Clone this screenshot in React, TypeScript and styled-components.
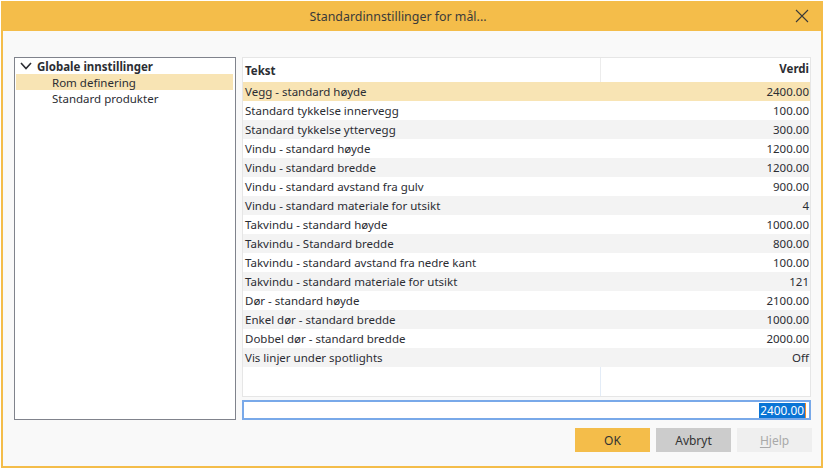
import React from 'react';
import styled, { createGlobalStyle } from 'styled-components';

const GlobalStyle = createGlobalStyle`
  html, body {
    margin: 0;
    padding: 0;
    background: #ffffff;
  }
  * {
    box-sizing: border-box;
  }
`;

const rows: { label: string; value: string }[] = [
  { label: 'Vegg - standard høyde', value: '2400.00' },
  { label: 'Standard tykkelse innervegg', value: '100.00' },
  { label: 'Standard tykkelse yttervegg', value: '300.00' },
  { label: 'Vindu - standard høyde', value: '1200.00' },
  { label: 'Vindu - standard bredde', value: '1200.00' },
  { label: 'Vindu - standard avstand fra gulv', value: '900.00' },
  { label: 'Vindu - standard materiale for utsikt', value: '4' },
  { label: 'Takvindu - standard høyde', value: '1000.00' },
  { label: 'Takvindu - Standard bredde', value: '800.00' },
  { label: 'Takvindu - standard avstand fra nedre kant', value: '100.00' },
  { label: 'Takvindu - standard materiale for utsikt', value: '121' },
  { label: 'Dør - standard høyde', value: '2100.00' },
  { label: 'Enkel dør - standard bredde', value: '1000.00' },
  { label: 'Dobbel dør - standard bredde', value: '2000.00' },
  { label: 'Vis linjer under spotlights', value: 'Off' },
];

const Window = styled.div`
  margin: 1px 0 0 1px;
  width: 822px;
  height: 467px;
  border: 2px solid #f4bd4a;
  border-top: none;
  background: #f9f9f9;
  display: flex;
  flex-direction: column;
  font-family: 'Noto Sans', 'Open Sans', sans-serif;
  color: #2b2d33;
`;

const TitleBar = styled.div`
  height: 30px;
  background: #f4bd4a;
  display: flex;
  align-items: center;
  justify-content: center;
  position: relative;
  padding-right: 28px;
  font-size: 12.4px;
  color: #3a3a3a;
`;

const CloseButton = styled.div`
  position: absolute;
  right: 12px;
  top: 8px;
  width: 14px;
  height: 14px;
  display: flex;
`;

const Body = styled.div`
  flex: 1;
  display: flex;
  flex-direction: column;
  padding: 26px 10px 0 11px;
`;

const Main = styled.div`
  display: flex;
  gap: 6px;
  height: 363px;
`;

const Tree = styled.div`
  width: 222px;
  border: 1px solid #80838c;
  background: #ffffff;
  padding: 0 2px 0 1px;
  font-size: 11.5px;
`;

const TreeNode = styled.div<{ $selected?: boolean; $level: number }>`
  height: 16px;
  display: flex;
  align-items: center;
  padding-left: ${(p) => (p.$level === 0 ? 4 : 36)}px;
  background: ${(p) => (p.$selected ? '#f8e4b4' : 'transparent')};
  font-weight: ${(p) => (p.$level === 0 ? 700 : 400)};
  gap: 5px;
  white-space: nowrap;
`;

const RightColumn = styled.div`
  flex: 1;
  display: flex;
  flex-direction: column;
  gap: 3px;
`;

const Grid = styled.div`
  height: 340px;
  border: 1px solid #e6e6e6;
  background: #ffffff;
  display: flex;
  flex-direction: column;
  font-size: 11.5px;
`;

const Row = styled.div<{ $bg: string; $height: number }>`
  display: grid;
  grid-template-columns: 358px 1fr;
  height: ${(p) => p.$height}px;
  background: ${(p) => p.$bg};
`;

const HeaderRow = styled(Row)`
  padding-bottom: 3px;
`;

const Cell = styled.div<{ $right?: boolean; $bold?: boolean; $line?: string }>`
  display: flex;
  align-items: center;
  justify-content: ${(p) => (p.$right ? 'flex-end' : 'flex-start')};
  padding: ${(p) => (p.$right ? '0 1px 0 0' : '0 0 0 2px')};
  font-weight: ${(p) => (p.$bold ? 700 : 400)};
  border-right: ${(p) => (p.$right ? 'none' : `1px solid ${p.$line ?? 'transparent'}`)};
  white-space: nowrap;
  overflow: hidden;
`;

const HeaderCell = styled(Cell)`
  margin-bottom: -3px;
`;

const Filler = styled(Row)`
  flex: 1;
`;

const EditBox = styled.div`
  height: 20px;
  border: 2px solid #79a9e9;
  background: #ffffff;
  display: flex;
  align-items: center;
  justify-content: flex-end;
  padding-right: 3px;
  font-size: 11.8px;
`;

const Selection = styled.span`
  background: #0a74d5;
  color: #ffffff;
  line-height: 15px;
  padding: 0 1px;
  border-right: 1px solid #f08a2a;
`;

const Buttons = styled.div`
  display: flex;
  justify-content: flex-end;
  gap: 6px;
  margin-top: 8px;
  margin-right: -1px;
`;

const Button = styled.div<{ $kind: 'primary' | 'secondary' | 'disabled' }>`
  width: 75px;
  height: 24px;
  display: flex;
  align-items: center;
  justify-content: center;
  font-size: 12px;
  background: ${(p) =>
    p.$kind === 'primary' ? '#f4bd4a' : p.$kind === 'secondary' ? '#cccccc' : '#efefef'};
  color: ${(p) => (p.$kind === 'disabled' ? '#a9a9a9' : '#333333')};

  u {
    text-decoration-thickness: 1px;
    text-underline-offset: 2px;
  }
`;

export default function App() {
  return (
    <>
      <GlobalStyle />
      <Window>
        <TitleBar>
          Standardinnstillinger for mål...
          <CloseButton>
            <svg width="14" height="14" viewBox="0 0 14 14">
              <path d="M1 1 L13 13 M13 1 L1 13" stroke="#3a3a3a" strokeWidth="1.1" fill="none" />
            </svg>
          </CloseButton>
        </TitleBar>
        <Body>
          <Main>
            <Tree>
              <TreeNode $level={0}>
                <svg width="12" height="8" viewBox="0 0 12 8">
                  <path d="M1 1 L6 6.5 L11 1" stroke="#2b2d33" strokeWidth="1.6" fill="none" />
                </svg>
                Globale innstillinger
              </TreeNode>
              <TreeNode $level={1} $selected>
                Rom definering
              </TreeNode>
              <TreeNode $level={1}>Standard produkter</TreeNode>
            </Tree>
            <RightColumn>
              <Grid>
                <HeaderRow $bg="#ffffff" $height={24}>
                  <HeaderCell $bold $line="#ececec">Tekst</HeaderCell>
                  <Cell $bold $right>Verdi</Cell>
                </HeaderRow>
                {rows.map((r, i) => {
                  const bg = i === 0 ? '#f8e4b4' : i % 2 === 1 ? '#ffffff' : '#f3f3f3';
                  return (
                    <Row key={r.label} $bg={bg} $height={19}>
                      <Cell $line={bg}>{r.label}</Cell>
                      <Cell $right>{r.value}</Cell>
                    </Row>
                  );
                })}
                <Filler $bg="#ffffff" $height={0}>
                  <Cell $line="#e3ecf7" />
                  <Cell $right />
                </Filler>
              </Grid>
              <EditBox>
                <Selection>2400.00</Selection>
              </EditBox>
            </RightColumn>
          </Main>
          <Buttons>
            <Button $kind="primary">OK</Button>
            <Button $kind="secondary">Avbryt</Button>
            <Button $kind="disabled">
              <u>H</u>jelp
            </Button>
          </Buttons>
        </Body>
      </Window>
    </>
  );
}
